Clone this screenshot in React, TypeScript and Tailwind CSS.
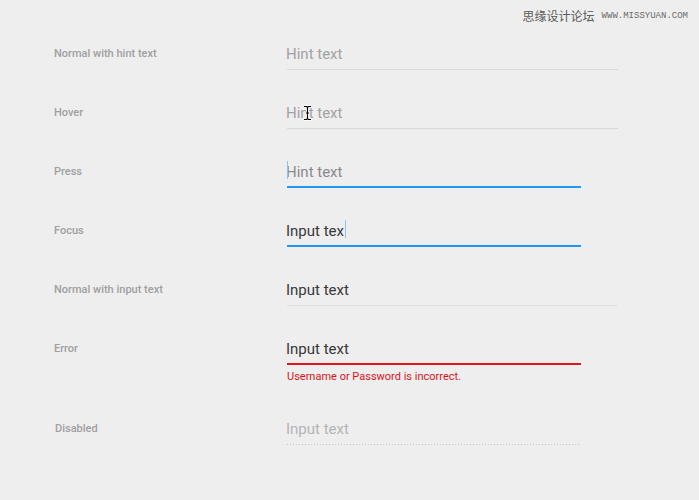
import React from "react";

const font = { fontFamily: "Roboto, 'Noto Sans', sans-serif" };

function Label({ children, extra = "" }: { children: React.ReactNode; extra?: string }) {
  return (
    <div className={`w-[287px] shrink-0 pl-[54px] mt-[2px] text-[11px] leading-4 font-medium text-[#a0a0a0] ${extra}`}>
      {children}
    </div>
  );
}

function IBeam() {
  return (
    <svg width="9" height="16" viewBox="0 0 9 16" className="absolute left-[17px] top-[2px]">
      <path d="M1 1.5h2.5l1 1 1-1H8M4.5 2.5v11M1 14.5h2.5l1-1 1 1H8M3 8h3" fill="none" stroke="#fff" strokeWidth="2.6" />
      <path d="M1 1.5h2.5l1 1 1-1H8M4.5 2.5v11M1 14.5h2.5l1-1 1 1H8M3 8h3" fill="none" stroke="#000" strokeWidth="1.1" />
    </svg>
  );
}

export default function App() {
  return (
    <div className="relative w-[699px] h-[500px] bg-[#eeeeee] overflow-hidden" style={font}>
      <div className="absolute top-[8px] right-[11px] flex items-center gap-[7px]">
        <span className="text-[12px] leading-4 text-[#5a5a5a]" style={{ fontFamily: "'Noto Sans CJK SC', sans-serif" }}>
          思缘设计论坛
        </span>
        <span className="text-[9px] leading-4 text-[#6a6a6a]" style={{ fontFamily: "'Liberation Mono', monospace" }}>
          WWW.MISSYUAN.COM
        </span>
      </div>

      <div className="flex flex-col pt-[44px]">
        {/* Normal with hint text */}
        <div className="flex items-start h-[59px]">
          <Label>Normal with hint text</Label>
          <div className="w-[331px] pb-[5px] border-b border-[#d9d9d9]">
            <div className="-ml-px text-[15px] leading-5 text-[#a2a2a2]">Hint text</div>
          </div>
        </div>

        {/* Hover */}
        <div className="flex items-start h-[59px]">
          <Label>Hover</Label>
          <div className="w-[331px] pb-[5px] border-b border-[#d9d9d9]">
            <div className="relative -ml-px text-[15px] leading-5 text-[#a2a2a2]">
              Hint text
              <IBeam />
            </div>
          </div>
        </div>

        {/* Press */}
        <div className="flex items-start h-[59px]">
          <Label>Press</Label>
          <div className="w-[294px] pb-[4px] border-b-2 border-[#2196f3]">
            <div className="relative -ml-px text-[15px] leading-5 text-[#8a8a8a]">
              <span className="absolute left-px top-[-1px] w-px h-[18px] bg-[#90c4f0]" />
              Hint text
            </div>
          </div>
        </div>

        {/* Focus */}
        <div className="flex items-start h-[59px]">
          <Label>Focus</Label>
          <div className="w-[294px] pb-[4px] border-b-2 border-[#2196f3]">
            <div className="flex items-start -ml-px text-[15px] leading-5 text-[#383838]">
              <span>Input tex</span>
              <span className="ml-[1px] mt-[-1px] w-px h-[18px] bg-[#90c4f0]" />
            </div>
          </div>
        </div>

        {/* Normal with input text */}
        <div className="flex items-start h-[59px]">
          <Label>Normal with input text</Label>
          <div className="w-[331px] pb-[5px] border-b border-[#dedede]">
            <div className="-ml-px text-[15px] leading-5 text-[#383838]">Input text</div>
          </div>
        </div>

        {/* Error */}
        <div className="flex items-start h-[80px]">
          <Label>Error</Label>
          <div className="flex flex-col">
            <div className="w-[294px] pb-[4px] border-b-2 border-[#e0161b]">
              <div className="-ml-px text-[15px] leading-5 text-[#383838]">Input text</div>
            </div>
            <div className="mt-[4px] text-[11px] leading-4 text-[#d8141a]">
              Username or Password is incorrect.
            </div>
          </div>
        </div>

        {/* Disabled */}
        <div className="flex items-start h-[59px]">
          <Label extra="pl-[55px]">Disabled</Label>
          <div className="w-[293px]">
            <div className="-ml-px text-[15px] leading-5 text-[#b4b4b4]">Input text</div>
            <div className="mt-[5px] h-px bg-[linear-gradient(to_right,#c4c4c4_34%,transparent_0%)] bg-[length:3px_1px] bg-repeat-x" />
          </div>
        </div>
      </div>
    </div>
  );
}
